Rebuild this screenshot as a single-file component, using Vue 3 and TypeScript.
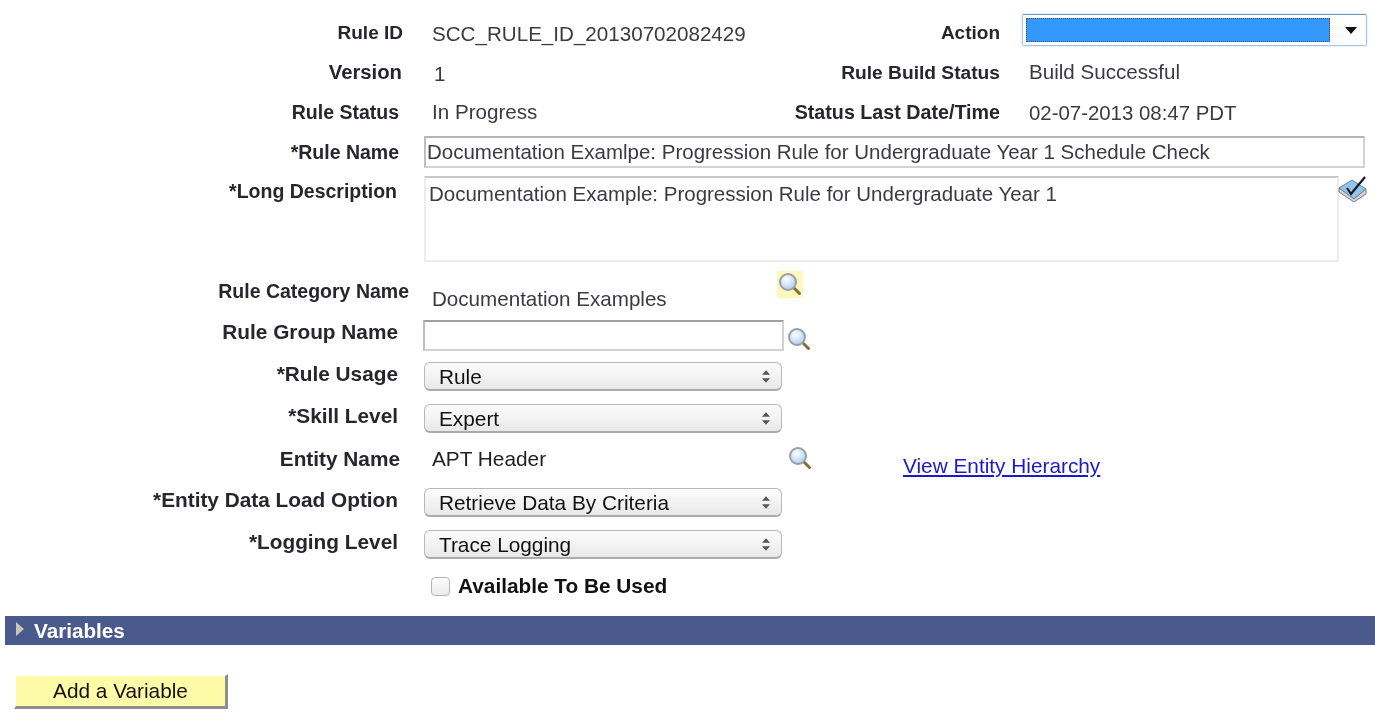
<script setup lang="ts">
const usage: string = 'Rule'
</script>

<template>
  <main class="page">
    <div class="row r-id">
      <span class="label l-id">Rule ID</span>
      <span class="value v-id">SCC_RULE_ID_20130702082429</span>
      <span class="label2 a1">Action</span>
      <div class="action">
        <div class="action-fill"></div>
        <svg class="caret" width="12" height="7" viewBox="0 0 12 7"><path d="M0 0h12L6 7z" fill="#111" /></svg>
      </div>
    </div>
    <div class="row r-ver">
      <span class="label l-ver">Version</span>
      <span class="value v-ver">1</span>
      <span class="label2 a2">Rule Build Status</span>
      <span class="value2 v-build">Build Successful</span>
    </div>
    <div class="row r-stat">
      <span class="label l-stat">Rule Status</span>
      <span class="value v-stat">In Progress</span>
      <span class="label2 a3">Status Last Date/Time</span>
      <span class="value2 v-date">02-07-2013 08:47 PDT</span>
    </div>
    <div class="row r-name">
      <span class="label l-stat">*Rule Name</span>
      <div class="text-input name-input">Documentation Examlpe: Progression Rule for Undergraduate Year 1 Schedule Check</div>
    </div>
    <div class="row r-desc">
      <span class="label l-desc">*Long Description</span>
      <div class="textarea">Documentation Example: Progression Rule for Undergraduate Year 1</div>
      <svg class="spell" width="30" height="28" viewBox="0 0 30 28">
        <path d="M1 13 14 5l14 9-12 10z" fill="#93c4e8" stroke="#6488a6" stroke-width="1" />
        <path d="M1 13v4l15 10 12-8v-5L16 24z" fill="#d4d6da" stroke="#747c88" stroke-width="1" />
        <path d="M9 13l4 6L27 2" fill="none" stroke="#15181f" stroke-width="2.200" />
      </svg>
    </div>
    <div class="row r-cat">
      <span class="label l-cat">Rule Category Name</span>
      <span class="value v-cat">Documentation Examples</span>
      <span class="lens-bg">
        <svg class="lens" width="24" height="24" viewBox="0 0 24 24">
          <defs>
            <radialGradient id="glass" cx="0.4" cy="0.35" r="0.7">
              <stop offset="0" stop-color="#ffffff" />
              <stop offset="1" stop-color="#a9cdf0" />
            </radialGradient>
          </defs>
          <path d="M14.500 14.500l7 7" stroke="#7d6f3a" stroke-width="3" stroke-linecap="round" />
          <circle cx="10" cy="10" r="8" fill="url(#glass)" stroke="#9a9ea5" stroke-width="2" />
        </svg>
      </span>
    </div>
    <div class="row r-group">
      <span class="label l-group">Rule Group Name</span>
      <div class="text-input group-input"></div>
      <svg class="lens" width="24" height="24" viewBox="0 0 24 24">
        <path d="M14.500 14.500l7 7" stroke="#7d6f3a" stroke-width="3" stroke-linecap="round" />
        <circle cx="10" cy="10" r="8" fill="url(#glass)" stroke="#9a9ea5" stroke-width="2" />
      </svg>
    </div>
    <div class="row r-sel r-first">
      <span class="label l-sel">*Rule Usage</span>
      <div class="select">{{ usage }}<svg class="updown" width="8" height="13" viewBox="0 0 9 14"><path d="M4.500 0 9 5H0zM0 9h9l-4.500 5z" fill="#555" /></svg></div>
    </div>
    <div class="row r-sel">
      <span class="label l-sel">*Skill Level</span>
      <div class="select">Expert<svg class="updown" width="8" height="13" viewBox="0 0 9 14"><path d="M4.500 0 9 5H0zM0 9h9l-4.500 5z" fill="#555" /></svg></div>
    </div>
    <div class="row r-entity">
      <span class="label l-ent">Entity Name</span>
      <span class="value v-ent">APT Header</span>
      <svg class="lens lens-ent" width="24" height="24" viewBox="0 0 24 24">
        <path d="M14.500 14.500l7 7" stroke="#7d6f3a" stroke-width="3" stroke-linecap="round" />
        <circle cx="10" cy="10" r="8" fill="url(#glass)" stroke="#9a9ea5" stroke-width="2" />
      </svg>
      <a class="link" href="#">View Entity Hierarchy</a>
    </div>
    <div class="row r-sel">
      <span class="label l-sel">*Entity Data Load Option</span>
      <div class="select">Retrieve Data By Criteria<svg class="updown" width="8" height="13" viewBox="0 0 9 14"><path d="M4.500 0 9 5H0zM0 9h9l-4.500 5z" fill="#555" /></svg></div>
    </div>
    <div class="row r-sel">
      <span class="label l-sel">*Logging Level</span>
      <div class="select">Trace Logging<svg class="updown" width="8" height="13" viewBox="0 0 9 14"><path d="M4.500 0 9 5H0zM0 9h9l-4.500 5z" fill="#555" /></svg></div>
    </div>
    <div class="row r-check">
      <span class="checkbox"></span>
      <span class="check-label">Available To Be Used</span>
    </div>
    <div class="bar">
      <svg class="tri" width="9" height="14" viewBox="0 0 9 14"><path d="M1 0l8 7-8 7z" fill="#c9c7b4" /></svg>
      <span>Variables</span>
    </div>
    <button class="add" type="button">Add a Variable</button>
  </main>
</template>

<style>
html, body { margin: 0; background: #fff; }
</style>

<style scoped>
.page {
  width: 1375px;
  height: 715px;
  overflow: hidden;
  padding-top: 13px;
  box-sizing: border-box;
  font-family: "Liberation Sans", Arial, sans-serif;
  font-size: 20.600px;
  color: #3a3a42;
  background: #fff;
  filter: blur(0.35px);
}
.row { display: flex; align-items: center; }
.label, .label2 { font-weight: 700; color: #26262c; text-align: right; flex: none; white-space: nowrap; font-size: 19.500px; }
.label { box-sizing: border-box; }
.label2 { box-sizing: border-box; width: 300px; }
.value, .value2 { flex: none; white-space: nowrap; }

.r-id { height: 40px; }
.r-ver { height: 39px; }
.r-stat { height: 40px; }
.l-id { width: 403px; font-size: 19px; }
.l-ver { width: 402px; font-size: 20.300px; }
.l-stat { width: 399px; }
.v-id { width: 319px; margin-left: 29px; margin-top: 2px; }
.v-ver { width: 318px; margin-left: 32px; margin-top: 2px; }
.v-stat { width: 320px; margin-left: 33px; }
.a1 { margin-left: -51px; font-size: 19px; }
.a2 { margin-left: -52px; font-size: 19.200px; }
.a3 { margin-left: -52px; font-size: 19.700px; }
.value2 { margin-left: 29px; }
.v-build { margin-top: -1px; }
.v-date { margin-top: 2px; font-size: 20.400px; }

.action {
  margin-left: 22px;
  width: 345px;
  height: 32px;
  margin-top: -6px;
  box-sizing: border-box;
  border: 1px solid #a9c5e4;
  border-top-color: #6f94bd;
  border-radius: 2px;
  box-shadow: 0 0 2px #bcd6f2;
  display: flex;
  align-items: center;
  padding-left: 3px;
}
.action-fill {
  width: 304px;
  height: 24px;
  background: #3399ff;
  box-sizing: border-box;
  border: 1px dotted #555;
}
.caret { margin-left: 15px; }

.r-name { height: 40px; }
.text-input {
  box-sizing: border-box;
  background: #fff;
  border: 2px solid #d2d2d2;
  border-top-color: #b4b4b4;
  border-left-color: #bdbdbd;
  white-space: nowrap;
  overflow: hidden;
}
.name-input {
  margin-left: 25px;
  width: 941px;
  height: 32px;
  line-height: 28px;
  padding-left: 1px;
  font-size: 20.500px;
}

.r-desc { height: 90px; align-items: flex-start; padding-top: 4px; box-sizing: border-box; }
.l-desc { width: 397px; margin-top: 4px; }
.textarea {
  margin-left: 27px;
  width: 915px;
  height: 86px;
  box-sizing: border-box;
  border: 2px solid #ececee;
  border-top-color: #c8c8cc;
  padding: 3px 3px;
  line-height: 26px;
  font-size: 20.500px;
}
.spell { margin-top: -1px; margin-left: -1px; flex: none; }

.r-cat { height: 36px; margin-top: 13px; }
.l-cat { width: 409px; margin-top: -4px; }
.v-cat { width: 345px; margin-left: 23px; margin-top: 12px; }
.lens-bg { width: 26px; height: 27px; background: #fdf7bd; display: flex; align-items: center; justify-content: center; margin-top: -18px; }
.lens { flex: none; }

.r-group { height: 31px; margin-top: 9px; }
.l-group { width: 398px; margin-top: -8px; font-size: 20.800px; }
.group-input { margin-left: 25px; width: 361px; height: 31px; border-top-color: #a0a0a0; }
.r-group .lens { margin-left: 3px; margin-top: 6px; }

.r-sel { height: 29px; margin-top: 13px; }
.r-first { margin-top: 11px; }
.l-sel { width: 398px; margin-top: -6px; font-size: 20.800px; }
.select {
  margin-left: 26px;
  width: 358px;
  height: 29px;
  box-sizing: border-box;
  border: 1px solid #b8b8b8;
  border-bottom: 2px solid #ababab;
  border-radius: 6px;
  background: linear-gradient(#fbfbfb, #f4f4f4 45%, #e8e8e8);
  padding-left: 14px;
  line-height: 28px;
  font-size: 20.800px;
  color: #111;
  position: relative;
}
.updown { position: absolute; right: 11px; top: 7px; }

.r-entity { height: 29px; margin-top: 13px; }
.l-ent { width: 400px; margin-top: -4px; font-size: 20.800px; }
.v-ent { width: 356px; margin-left: 32px; margin-top: -4px; color: #222; font-size: 20.800px; }
.lens-ent { margin-top: -6px; }
.link { margin-left: 91px; margin-top: 10px; color: #1a1ac8; text-decoration: underline; font-size: 20.800px; }

.r-check { height: 30px; margin-top: 12px; }
.checkbox {
  margin-left: 431px;
  width: 19px;
  height: 19px;
  box-sizing: border-box;
  border: 1px solid #b4b4b4;
  border-radius: 4px;
  background: linear-gradient(#fdfdfd, #ececec);
}
.check-label { margin-left: 8px; font-weight: 700; color: #111; font-size: 20.800px; }

.bar {
  margin-top: 15px;
  margin-left: 5px;
  height: 29px;
  background: #4b5a8c;
  color: #fff;
  font-weight: 700;
  font-size: 20.700px;
  display: flex;
  align-items: center;
  padding-left: 10px;
  box-sizing: border-box;
}
.tri { margin-top: -4px; margin-right: 10px; }

.add {
  display: block;
  margin: 29px 0 0 14px;
  width: 214px;
  height: 35px;
  box-sizing: border-box;
  background: #fdfba8;
  background-clip: padding-box;
  border-style: solid;
  border-width: 2px 3px 3px 2px;
  border-color: transparent #8e8e8e #8e8e8e transparent;
  font-family: inherit;
  font-size: 20.800px;
  color: #111;
  padding: 0;
  text-align: center;
}
</style>
